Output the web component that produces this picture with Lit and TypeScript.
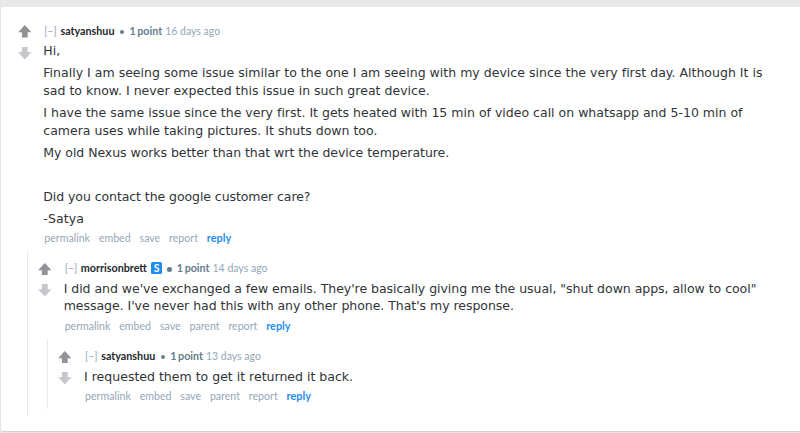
import { LitElement, html, css, nothing } from "lit";
import { customElement, property } from "lit/decorators.js";

interface Paragraph {
  lines: string[];
  tracking?: number;
}

interface CommentData {
  author: string;
  submitter?: boolean;
  age: string;
  paragraphs: Paragraph[];
  actions: string[];
  replies: CommentData[];
}

const thread: CommentData = {
  author: "satyanshuu",
  age: "16 days ago",
  paragraphs: [
    { lines: ["Hi,"] },
    {
      lines: [
        "Finally I am seeing some issue similar to the one I am seeing with my device since the very first day. Although It is",
        "sad to know. I never expected this issue in such great device.",
      ],
      tracking: 0.01,
    },
    {
      lines: [
        "I have the same issue since the very first. It gets heated with 15 min of video call on whatsapp and 5-10 min of",
        "camera uses while taking pictures. It shuts down too.",
      ],
    },
    { lines: ["My old Nexus works better than that wrt the device temperature."], tracking: -0.055 },
    { lines: ["\u00a0"] },
    { lines: ["Did you contact the google customer care?"], tracking: -0.08 },
    { lines: ["-Satya"], tracking: 0.1 },
  ],
  actions: ["permalink", "embed", "save", "report"],
  replies: [
    {
      author: "morrisonbrett",
      submitter: true,
      age: "14 days ago",
      paragraphs: [
        {
          lines: [
            "I did and we've exchanged a few emails. They're basically giving me the usual, \"shut down apps, allow to cool\"",
            "message. I've never had this with any other phone. That's my response.",
          ],
          tracking: -0.04,
        },
      ],
      actions: ["permalink", "embed", "save", "parent", "report"],
      replies: [
        {
          author: "satyanshuu",
          age: "13 days ago",
          paragraphs: [{ lines: ["I requested them to get it returned it back."] }],
          actions: ["permalink", "embed", "save", "parent", "report"],
          replies: [],
        },
      ],
    },
  ],
};

@customElement("thread-comment")
export class ThreadComment extends LitElement {
  @property({ attribute: false }) data!: CommentData;

  static styles = css`
    :host {
      display: block;
    }
    .entry {
      display: grid;
      grid-template-columns: 13.6px 1fr;
      column-gap: 12.2px;
      padding: 9px 0 0 10px;
    }
    .votes {
      display: flex;
      flex-direction: column;
      gap: 8.6px;
      padding-top: 1.4px;
    }
    .arrow {
      display: block;
      width: 13.6px;
      height: 12.6px;
      fill: #919396;
    }
    .down {
      fill: #c5c7ca;
      transform: rotate(180deg);
    }
    .tagline,
    .actions {
      display: flex;
      align-items: center;
      height: 14px;
      font: 10.5px/14px Lato, sans-serif;
      color: #94a7b7;
      white-space: nowrap;
    }
    .tagline {
      padding-left: 1px;
    }
    .author {
      margin-left: 3.6px;
      font-size: 10.75px;
      font-weight: 700;
      color: #24282c;
    }
    .badge {
      width: 10.4px;
      height: 12px;
      margin-left: 4.6px;
      border-radius: 1.5px;
      background: #1f8ded;
      color: #fff;
      font: 700 10.5px/12px Lato, sans-serif;
      text-align: center;
    }
    .dot {
      width: 4.6px;
      height: 4.6px;
      margin: 2px 5px 0 5.4px;
      border-radius: 50%;
      background: #647b8c;
    }
    .points {
      font-size: 10.7px;
      font-weight: 700;
      color: #647b8c;
      word-spacing: -1px;
      margin-right: 3px;
    }
    .body {
      display: flex;
      flex-direction: column;
      gap: 4.2px;
      margin-top: 4.4px;
      font: 12.53px/17.75px "DejaVu Sans", Verdana, sans-serif;
      font-variant-ligatures: none;
      color: #303438;
      white-space: nowrap;
    }
    .body p {
      margin: 0;
    }
    .line {
      display: block;
    }
    .actions {
      margin-top: 4.2px;
      padding-left: 1px;
      gap: 8.9px;
      font-size: 10.6px;
    }
    .reply {
      font-size: 10.9px;
      font-weight: 700;
      color: #1f8ded;
    }
    .replies {
      margin: 6.8px 0 0 19.4px;
      border-left: 1px solid #e5eaec;
      padding-bottom: 6px;
    }
    .parent {
      padding-bottom: 7px;
    }
  `;

  private arrow(kind: string) {
    return html`<svg class="arrow ${kind}" viewBox="0 0 13.6 12.6" aria-label=${kind}>
      <path d="M6.8 0 13.5 7.3H9.7V12.5H3.9V7.3H.1Z" />
    </svg>`;
  }

  render() {
    const c = this.data;
    return html`
      <div class="entry">
        <div class="votes">${this.arrow("up")}${this.arrow("down")}</div>
        <div>
          <div class="tagline">
            <span>[–]</span>
            <span class="author">${c.author}</span>
            ${c.submitter ? html`<span class="badge">S</span>` : nothing}
            <span class="dot"></span>
            <span class="points">1 point</span>
            <span>${c.age}</span>
          </div>
          <div class="body">
            ${c.paragraphs.map(
              (p) => html`<p style="letter-spacing:${p.tracking ?? 0}px">
                ${p.lines.map((l) => html`<span class="line">${l}</span>`)}
              </p>`
            )}
          </div>
          <div class="actions">
            ${c.actions.map((a) => html`<span>${a}</span>`)}
            <span class="reply">reply</span>
          </div>
        </div>
      </div>
      ${c.replies.map(
        (r) => html`<div class="replies ${r.replies.length ? "parent" : ""}">
          <thread-comment .data=${r}></thread-comment>
        </div>`
      )}
    `;
  }
}

@customElement("app-root")
export class AppRoot extends LitElement {
  static styles = css`
    :host {
      display: block;
      box-sizing: border-box;
      height: 433px;
      overflow: hidden;
      padding: 7px 0 0 1px;
      background: #e8e8e8;
    }
    .card {
      box-sizing: border-box;
      height: 424px;
      padding: 8px 0 0 6.5px;
      border-radius: 2px 0 0 2px;
      background: #fff;
      box-shadow: 0 0 1px #d4d4d4, 0 1px 1px #d0d0d0;
    }
  `;

  render() {
    return html`<main class="card"><thread-comment .data=${thread}></thread-comment></main>`;
  }
}
